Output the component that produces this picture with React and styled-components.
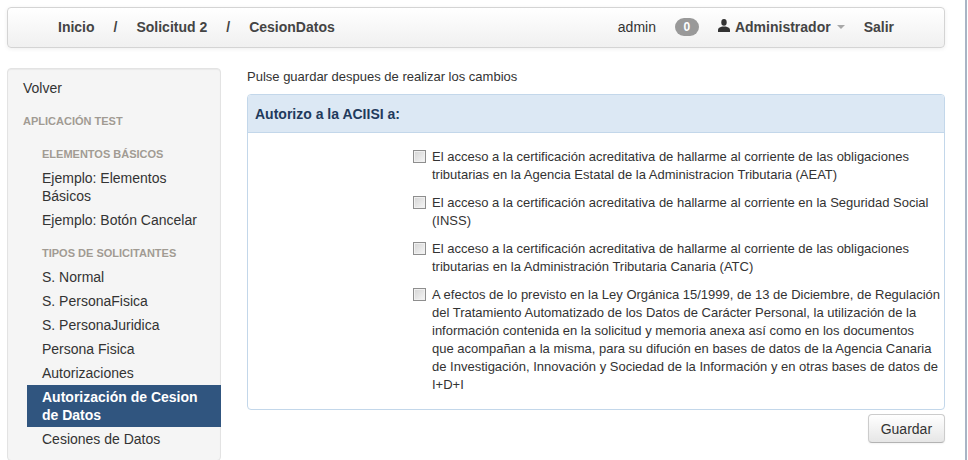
import React from 'react';
import styled, { createGlobalStyle } from 'styled-components';

const GlobalStyle = createGlobalStyle`
    html, body {
        margin: 0;
        padding: 0;
        background: #ffffff;
    }
    body {
        font-family: "Liberation Sans", Arial, Helvetica, sans-serif;
        font-size: 14px;
        line-height: 18px;
        color: #333333;
    }
    * {
        box-sizing: border-box;
    }
`;

const breadcrumb = ['Inicio', 'Solicitud 2', 'CesionDatos'];

const autorizaciones = [
    [
        'El acceso a la certificación acreditativa de hallarme al corriente de las obligaciones',
        'tributarias en la Agencia Estatal de la Administracion Tributaria (AEAT)'
    ],
    [
        'El acceso a la certificación acreditativa de hallarme al corriente en la Seguridad Social',
        '(INSS)'
    ],
    [
        'El acceso a la certificación acreditativa de hallarme al corriente de las obligaciones',
        'tributarias en la Administración Tributaria Canaria (ATC)'
    ],
    [
        'A efectos de lo previsto en la Ley Orgánica 15/1999, de 13 de Diciembre, de Regulación',
        'del Tratamiento Automatizado de los Datos de Carácter Personal, la utilización de la',
        'información contenida en la solicitud y memoria anexa así como en los documentos',
        'que acompañan a la misma, para su difución en bases de datos de la Agencia Canaria',
        'de Investigación, Innovación y Sociedad de la Información y en otras bases de datos de',
        'I+D+I'
    ]
];

function UserIcon() {
    return (
        <svg width="12" height="13" viewBox="0 0 12 13">
            <ellipse cx="6" cy="3.4" rx="2.7" ry="3.3" fill="#333" />
            <path d="M0 13 L0 10.8 Q0 8.6 2.8 8 L4.4 7.4 L7.6 7.4 L9.2 8 Q12 8.6 12 10.8 L12 13 Z" fill="#333" />
        </svg>
    );
}

function App() {
    return (
        <Page>
            <GlobalStyle />
            <Navbar>
                <Breadcrumb>
                    {breadcrumb.map((item, i) => (
                        <React.Fragment key={item}>
                            {i > 0 && <Divider>/</Divider>}
                            <NavLink>{item}</NavLink>
                        </React.Fragment>
                    ))}
                </Breadcrumb>
                <UserBar>
                    <UserName>admin</UserName>
                    <Badge>0</Badge>
                    <Dropdown>
                        <UserIcon />
                        <NavLink>Administrador</NavLink>
                        <Caret />
                    </Dropdown>
                    <NavLink>Salir</NavLink>
                </UserBar>
            </Navbar>

            <Layout>
                <Sidebar>
                    <SideItem>Volver</SideItem>
                    <SideHeader>Aplicación Test</SideHeader>
                    <SubList>
                        <SideHeader>Elementos Básicos</SideHeader>
                        <SideItem>Ejemplo: Elementos Básicos</SideItem>
                        <SideItem>Ejemplo: Botón Cancelar</SideItem>
                        <SideHeader>Tipos de Solicitantes</SideHeader>
                        <SideItem>S. Normal</SideItem>
                        <SideItem>S. PersonaFisica</SideItem>
                        <SideItem>S. PersonaJuridica</SideItem>
                        <SideItem>Persona Fisica</SideItem>
                        <SideItem>Autorizaciones</SideItem>
                        <SideItem $active>Autorización de Cesion de Datos</SideItem>
                        <SideItem>Cesiones de Datos</SideItem>
                    </SubList>
                </Sidebar>

                <Main>
                    <Hint>Pulse guardar despues de realizar los cambios</Hint>
                    <Panel>
                        <PanelHeading>Autorizo a la ACIISI a:</PanelHeading>
                        <PanelBody>
                            {autorizaciones.map((lineas, i) => (
                                <CheckRow key={i}>
                                    <Checkbox type="checkbox" />
                                    <CheckText>
                                        {lineas.map((linea, j) => (
                                            <React.Fragment key={j}>
                                                {j > 0 && <br />}
                                                {linea}
                                            </React.Fragment>
                                        ))}
                                    </CheckText>
                                </CheckRow>
                            ))}
                        </PanelBody>
                    </Panel>
                    <Actions>
                        <Button type="button">Guardar</Button>
                    </Actions>
                </Main>
            </Layout>
        </Page>
    );
}

const Page = styled.div`
    width: 967px;
    min-height: 460px;
    padding: 7px 20px 0 7px;
    border-right: 2px solid #a9b5c5;
`;

const Navbar = styled.div`
    height: 41px;
    display: flex;
    align-items: center;
    justify-content: space-between;
    padding: 0 50px 2px;
    background: linear-gradient(to bottom, #ffffff, #f0f0f0);
    border: 1px solid #d4d4d4;
    border-radius: 4px;
    box-shadow: 0 1px 4px rgba(0, 0, 0, 0.065);
`;

const Breadcrumb = styled.div`
    display: flex;
    align-items: center;
    gap: 19px;
`;

const NavLink = styled.span`
    font-weight: bold;
    font-size: 14px;
    color: #444;
`;

const Divider = styled.span`
    font-weight: bold;
    color: #444;
`;

const UserBar = styled.div`
    display: flex;
    align-items: center;
    gap: 19px;
`;

const UserName = styled.span`
    color: #333;
    font-size: 14px;
`;

const Badge = styled.span`
    display: inline-block;
    width: 24px;
    height: 18px;
    line-height: 18px;
    border-radius: 9px;
    background: #999;
    color: #fff;
    font-size: 12px;
    font-weight: bold;
    text-align: center;
`;

const Dropdown = styled.div`
    display: flex;
    align-items: center;
    gap: 5px;

    svg {
        margin-top: -2px;
    }
`;

const Caret = styled.span`
    width: 0;
    height: 0;
    margin-left: 1px;
    border-left: 4px solid transparent;
    border-right: 4px solid transparent;
    border-top: 4px solid #a8a8a8;
`;

const Layout = styled.div`
    display: grid;
    grid-template-columns: 214px 1fr;
    gap: 26px;
    margin-top: 20px;
`;

const Sidebar = styled.div`
    background: #f5f5f5;
    border: 1px solid #e3e3e3;
    border-radius: 4px;
    padding: 7px 0 9px;
    box-shadow: inset 0 1px 1px rgba(0, 0, 0, 0.05);
`;

const SubList = styled.div`
    margin-left: 19px;
    margin-right: -1px;
`;

const SideItem = styled.div`
    padding: 3px 15px;
    font-size: 14px;
    line-height: 18px;
    color: ${p => (p.$active ? '#fff' : '#333')};
    background: ${p => (p.$active ? '#30557f' : 'transparent')};
    font-weight: ${p => (p.$active ? 'bold' : 'normal')};
`;

const SideHeader = styled.div`
    margin-top: 9px;
    padding: 3px 15px;
    font-size: 11px;
    line-height: 18px;
    font-weight: bold;
    text-transform: uppercase;
    color: #a19b93;
    text-shadow: 0 1px 0 rgba(255, 255, 255, 0.5);
`;

const Main = styled.div`
    display: flex;
    flex-direction: column;
`;

const Hint = styled.p`
    margin: 0;
    font-size: 13px;
    line-height: 18px;
    color: #333;
`;

const Panel = styled.div`
    margin-top: 8px;
    border: 1px solid #c3d7ea;
    border-radius: 4px;
    overflow: hidden;
`;

const PanelHeading = styled.div`
    padding: 10px 7px 9px;
    background: #dce8f4;
    border-bottom: 1px solid #c3d7ea;
    font-size: 14px;
    line-height: 18px;
    font-weight: bold;
    color: #1f3a5c;
`;

const PanelBody = styled.div`
    display: flex;
    flex-direction: column;
    gap: 10px;
    padding: 15px 4px 15px 165px;
`;

const CheckRow = styled.label`
    display: flex;
    align-items: flex-start;
    gap: 6px;
`;

const Checkbox = styled.input`
    appearance: none;
    flex: none;
    width: 13px;
    height: 13px;
    margin: 2px 0 0;
    border: 1px solid #8e8e8e;
    background: linear-gradient(135deg, #d4d4d4, #f6f6f6);
    box-shadow: inset 0 0 0 1px #f0f0f0;
`;

const CheckText = styled.span`
    font-size: 13px;
    line-height: 18px;
    color: #333;
    white-space: nowrap;
`;

const Actions = styled.div`
    display: flex;
    justify-content: flex-end;
    margin-top: 4px;
`;

const Button = styled.button`
    height: 29px;
    padding: 4px 12px;
    font-family: inherit;
    font-size: 14px;
    line-height: 18px;
    color: #333;
    background: linear-gradient(to bottom, #ffffff, #e6e6e6);
    border: 1px solid #cccccc;
    border-bottom-color: #b3b3b3;
    border-radius: 4px;
    box-shadow: inset 0 1px 0 rgba(255, 255, 255, 0.2), 0 1px 2px rgba(0, 0, 0, 0.05);
`;

export default App;
